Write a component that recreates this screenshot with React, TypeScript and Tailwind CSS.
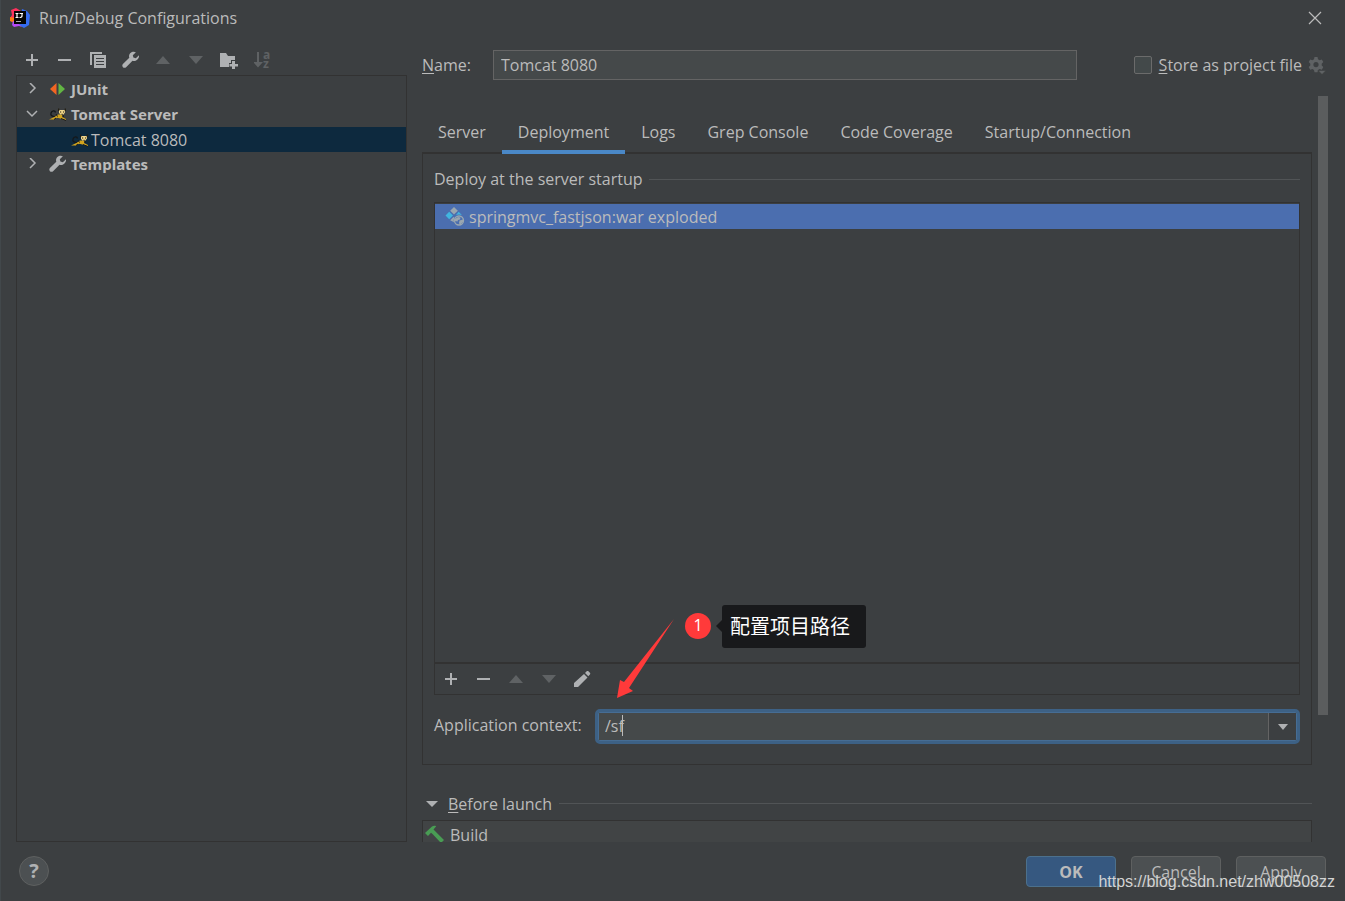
import { useState } from "react";
import type { ReactNode } from "react";

const PlusIcon = () => (
  <svg width="16" height="16" viewBox="0 0 16 16" fill="#afb1b3">
    <path d="M7 2h2v5h5v2H9v5H7V9H2V7h5z" />
  </svg>
);

const MinusIcon = () => (
  <svg width="16" height="16" viewBox="0 0 16 16" fill="#afb1b3">
    <path d="M1 7h13v2H1z" />
  </svg>
);

const UpIcon = () => (
  <svg width="16" height="16" viewBox="0 0 16 16" fill="#5f6264">
    <path d="M0 12l7-8 7 8z" />
  </svg>
);

const DownIcon = () => (
  <svg width="16" height="16" viewBox="0 0 16 16" fill="#5f6264">
    <path d="M0 4h14l-7 8z" />
  </svg>
);

const CopyIcon = () => (
  <svg width="18" height="18" viewBox="0 0 18 18" fill="#afb1b3">
    <path d="M1 1h12v2H3v11H1z" />
    <path fillRule="evenodd" d="M5 4h12v13H5zM7 7v1h8V7zM7 10v1h8v-1zM7 13v1h8v-1z" />
  </svg>
);

const WrenchIcon = () => (
  <svg width="18" height="18" viewBox="0 0 18 18" fill="#afb1b3">
    <path d="M17 4.200L13.800 7.200l-2.400-.6-.6-2.300L13.900 1.200C12 .3 9.900.6 8.400 2.100 7.100 3.400 6.700 5.200 7.300 6.800L.9 13.100c-.8.9-.8 2.200 0 3.100.9.800 2.300.8 3.200 0l6.400-6.400c1.600.5 3.400.2 4.700-1.100 1.300-1.200 2.100-2.900 1.800-4.500z" />
  </svg>
);

const FolderPlusIcon = () => (
  <svg width="20" height="18" viewBox="0 0 20 18" fill="#afb1b3">
    <path d="M0 2h6l2 3h7v4h-4v3H9v4H0z" />
    <path d="M12 10h3v3h3v2.500h-3v3h-3v-3H9.500V13H12z" />
  </svg>
);

const SortIcon = () => (
  <svg width="18" height="18" viewBox="0 0 18 18" fill="#5f6264">
    <path d="M3 1h2v10h4l-5 5.500L-1 11h4z" />
    <text x="9" y="8" fontSize="12" fontWeight="bold">a</text>
    <text x="9" y="17" fontSize="12" fontWeight="bold">z</text>
  </svg>
);

const PencilIcon = () => (
  <svg width="18" height="18" viewBox="0 0 18 18" fill="#afb1b3">
    <path d="M10 4l3.500 3.500L4 17H0v-4zM11 3l1.700-1.700c.5-.5 1.200-.5 1.700 0l1.500 1.500c.5.5.5 1.200 0 1.700L14.300 6.200z" />
  </svg>
);

const GearIcon = () => (
  <svg width="18" height="18" viewBox="0 0 18 18" fill="#5f6264">
    <path
      fillRule="evenodd"
      d="M6.500 0h3l.5 2.300 1.600.9 2.200-.7 1.500 2.600L13.700 6.700v1.900l1.600 1.500-1.500 2.600-2.200-.7-1.600.9-.5 2.300h-3L6 12.900 4.400 12l-2.200.7L.7 10.100l1.600-1.500V6.700L.7 5.100l1.500-2.600 2.200.7L6 2.300zM8 5a2.600 2.600 0 100 5.200A2.600 2.600 0 008 5z"
    />
    <path d="M10 13.500h8l-4 4z" stroke="#3c3f41" strokeWidth=".6" />
  </svg>
);

const JUnitIcon = () => (
  <svg width="18" height="16" viewBox="0 0 18 16">
    <path d="M7.500 2v12L1 8z" fill="#f26522" />
    <path d="M9.500 2v12L16 8z" fill="#62b543" />
  </svg>
);

const TomcatIcon = () => (
  <svg width="18" height="16" viewBox="0 0 18 16" className="shrink-0">
    <path d="M7 10.500C4 11 1 9.500 2 7s4-3 4.500-.5" fill="none" stroke="#15181a" strokeWidth="1.300" />
    <path d="M0 13.500L5.500 11 9 8.500h4.500L13 11l4 2v1.300l-5.500-1.800-3.500-.7-3 1.700H0z" fill="#d2a41d" />
    <path d="M7 8l1.500 2.500M5 13.500l2-1.500M12 12.500l5 2M14 9l.5 2" stroke="#191919" strokeWidth="1" />
    <path d="M10 4h6v2.500L14 9h-2l-2-2z" fill="#efd58a" />
    <path d="M9.700 2.500V5M16.300 2.500V5M11 6h1.200M14 6h1.200M12.500 8.300h1.200" stroke="#221d10" strokeWidth="1.200" />
  </svg>
);

const ArtifactIcon = () => (
  <svg width="20" height="20" viewBox="0 0 20 20">
    <path d="M9 0l3.800 3.800L9 7.500 5.200 3.800z" fill="#9aa7b0" />
    <path d="M4.200 4.700L8 8.500l-3.800 3.800L.5 8.500z" fill="#40b6e0" />
    <path d="M13.700 4.700L17 8.200c-2-.9-4.500-.8-6.300.2z" fill="#40b6e0" />
    <path d="M8.500 10l1 .6c-.8 1.500-.9 3-.5 4.600L5.200 13.200z" fill="#9aa7b0" />
    <circle cx="14" cy="13.500" r="4.500" fill="none" stroke="#9aa7b0" strokeWidth="1.300" />
    <path d="M10 12l3-2 2.500.5-.5 2-2 .5-.5 1.500L10 14zM14.500 13.500l3.500-1v2.500L15 18l-1-2z" fill="#9aa7b0" />
  </svg>
);

const HammerIcon = () => (
  <svg width="20" height="20" viewBox="0 0 20 20" fill="#499c54">
    <path d="M0 8l7-6.500c1.500-.9 3-.7 4.200-.3L8.500 4.500l2 2L19 15l-3 3-8.500-9-1.500-1.200L3 11z" />
  </svg>
);

const LogoIcon = () => (
  <svg width="20" height="20" viewBox="0 0 20 20">
    <path d="M1 2l5-2 5 3-5 9-6-2 2-3z" fill="#fe315d" />
    <path d="M0 9l5 1-1 5-4-2z" fill="#f97a12" />
    <path d="M12 1l5 2 3 4-1 10-5 3-5-3z" fill="#356cf0" />
    <path d="M3 13l4 1 5 5-3-1-5 1-2-2z" fill="#b74af7" />
    <path d="M4 3h12v13H4z" fill="#050505" />
    <path d="M5.500 5.500h3M7 5.500v4M5.500 9.500h3M9.500 5.500h3.500M12 5.500V8q0 1.500-2.500 1.500" fill="none" stroke="#fff" strokeWidth="1.200" />
    <path d="M6 13.500h5" stroke="#aaa" />
  </svg>
);

const Chevron = ({ open }: { open?: boolean }) => (
  <svg width="12" height="12" viewBox="0 0 12 12" fill="none" stroke="#afb1b3" strokeWidth="1.500">
    <path d={open ? "M1 3l5 5 5-5" : "M4 0l5 5-5 5"} />
  </svg>
);

const ToolButton = ({ label, disabled, children }: { label: string; disabled?: boolean; children: ReactNode }) => (
  <button type="button" aria-label={label} disabled={disabled} className="flex h-5 w-5 items-center justify-center">
    {children}
  </button>
);

const tabs = ["Server", "Deployment", "Logs", "Grep Console", "Code Coverage", "Startup/Connection"];

const TreeGroup = ({ open, icon, label }: { open?: boolean; icon: ReactNode; label: string }) => (
  <li className="flex h-[25px] items-center pb-px pl-[9px] font-['Noto_Sans',sans-serif] text-[15px] font-bold">
    <Chevron open={open} />
    <span className="ml-[11px] flex w-[22px] justify-center pr-1">{icon}</span>
    {label}
  </li>
);

const Sidebar = () => (
  <aside className="flex w-[391px] shrink-0 flex-col">
    <div className="flex h-[30px] items-center gap-[13px] pl-[6px]">
      <ToolButton label="Add"><PlusIcon /></ToolButton>
      <ToolButton label="Remove"><MinusIcon /></ToolButton>
      <ToolButton label="Copy"><CopyIcon /></ToolButton>
      <ToolButton label="Edit templates"><WrenchIcon /></ToolButton>
      <ToolButton label="Move up" disabled><UpIcon /></ToolButton>
      <ToolButton label="Move down" disabled><DownIcon /></ToolButton>
      <ToolButton label="New folder"><FolderPlusIcon /></ToolButton>
      <ToolButton label="Sort" disabled><SortIcon /></ToolButton>
    </div>
    <ul className="flex-1 border border-[#323232] pt-px">
      <TreeGroup icon={<JUnitIcon />} label="JUnit" />
      <TreeGroup open icon={<TomcatIcon />} label="Tomcat Server" />
      <li className="flex h-[25px] items-center gap-[2px] bg-[#0d293e] pl-[54px]">
        <TomcatIcon />
        Tomcat 8080
      </li>
      <TreeGroup icon={<WrenchIcon />} label="Templates" />
    </ul>
  </aside>
);

const Annotation = () => (
  <div className="pointer-events-none absolute -bottom-[18px] left-[182px] flex items-start">
    <svg width="58" height="94" viewBox="0 0 58 94" className="mt-[13px]">
      <path d="M57 1L12 70l4 3L0 80l3-18 4 2z" fill="#ff3a3a" />
    </svg>
    <span className="ml-[10px] mt-2 flex h-[26px] w-[26px] items-center justify-center rounded-full bg-[#ff3a3a] pb-[2px] text-white">
      1
    </span>
    <svg width="6" height="12" viewBox="0 0 6 12" className="ml-[5px] mt-[15px]">
      <path d="M6 0v12L0 6z" fill="#18191b" />
    </svg>
    <span className="flex h-[43px] items-center rounded-[3px] bg-[#18191b] pl-2 pr-4 pt-px text-[20px] text-white">
      配置项目路径
    </span>
  </div>
);

const Deployment = () => {
  const [context, setContext] = useState("/sf");

  return (
    <section className="flex flex-1 flex-col border border-t-2 border-[#323232] px-[11px] pb-5">
      <div className="flex h-12 items-center gap-[6px] pt-[2px]">
        <h2>Deploy at the server startup</h2>
        <div className="h-px flex-1 bg-[#515456]" />
      </div>
      <div className="relative flex flex-1 flex-col border border-[#323232]">
        <ul className="flex-1 pt-px">
          <li className="flex h-[25px] items-center gap-1 bg-[#4b6eaf] pl-[10px]">
            <ArtifactIcon />
            springmvc_fastjson:war exploded
          </li>
        </ul>
        <div className="flex h-8 items-center gap-[13px] border-t-2 border-[#323232] pl-[6px]">
          <ToolButton label="Add artifact"><PlusIcon /></ToolButton>
          <ToolButton label="Remove artifact"><MinusIcon /></ToolButton>
          <ToolButton label="Move artifact up" disabled><UpIcon /></ToolButton>
          <ToolButton label="Move artifact down" disabled><DownIcon /></ToolButton>
          <ToolButton label="Edit artifact"><PencilIcon /></ToolButton>
        </div>
        <Annotation />
      </div>
      <div className="mt-[14px] flex items-center">
        <label htmlFor="context" className="w-[161px] pb-[3px]">Application context:</label>
        <div className="flex h-[35px] flex-1 overflow-hidden rounded-[5px] border-[3px] border-[#3d6185] bg-[#45494a]">
          <div className="relative flex flex-1 border border-[#466d94]">
            <input
              id="context"
              value={context}
              onChange={(e) => setContext(e.target.value)}
              className="w-full bg-transparent pb-[2px] pl-[6px] outline-none"
            />
            <span className="absolute left-[23px] top-[2px] h-[21px] w-px bg-[#bbbbbb]" />
            <button type="button" aria-label="Show contexts" className="flex w-7 shrink-0 items-center justify-center border-l border-[#646464] bg-[#3c3f41]">
              <svg width="12" height="8" viewBox="0 0 12 8" fill="#afb1b3"><path d="M1 1h10L6 7z" /></svg>
            </button>
          </div>
        </div>
      </div>
    </section>
  );
};

const Editor = () => {
  const [tab, setTab] = useState("Deployment");
  const [name, setName] = useState("Tomcat 8080");

  return (
    <div className="flex min-w-0 flex-1 flex-col">
      <div className="flex h-[51px] items-start pt-[5px]">
        <label htmlFor="name" className="flex h-[30px] w-[71px] items-center pb-px">
          <span><span className="underline underline-offset-2">N</span>ame:</span>
        </label>
        <input
          id="name"
          value={name}
          onChange={(e) => setName(e.target.value)}
          className="h-[30px] flex-1 border border-[#646464] bg-[#45494a] px-[7px] pb-px outline-none"
        />
        <label className="ml-[57px] flex h-[30px] items-center gap-[7px]">
          <input type="checkbox" className="h-[18px] w-[18px] appearance-none rounded-[2px] border border-[#6b6b6b] bg-[#43494a]" />
          <span><span className="underline underline-offset-2">S</span>tore as project file</span>
        </label>
        <button type="button" aria-label="Storage options" disabled className="ml-[6px] mr-[2px] flex h-[30px] items-center pt-[2px]">
          <GearIcon />
        </button>
      </div>
      <div className="flex flex-1 gap-[6px]">
        <div className="flex min-w-0 flex-1 flex-col">
          <nav role="tablist" className="z-10 -mb-[2px] flex pt-[15px]">
            {tabs.map((t) => (
              <button
                key={t}
                type="button"
                role="tab"
                aria-selected={t === tab}
                onClick={() => setTab(t)}
                className={
                  t === tab
                    ? "h-[43px] border-b-4 border-[#4a88c7] px-4 pt-[2px]"
                    : "h-[43px] border-b-4 border-transparent px-4 pt-[2px]"
                }
              >
                {t}
              </button>
            ))}
          </nav>
          <Deployment />
          <div className="mt-[22px] flex h-[33px] items-center">
            <button type="button" className="flex items-center gap-[10px] pl-1">
              <svg width="12" height="8" viewBox="0 0 12 8" fill="#afb1b3"><path d="M0 1h12L6 7z" /></svg>
              <span><span className="underline underline-offset-2">B</span>efore launch</span>
            </button>
            <div className="ml-[7px] h-px flex-1 bg-[#515456]" />
          </div>
          <div className="flex h-[22px] items-start gap-[5px] overflow-hidden border border-b-0 border-[#323232] bg-[#414445] pl-[2px] pt-1">
            <HammerIcon />
            <span>Build</span>
          </div>
        </div>
        <div className="w-[10px]">
          <div className="h-[83%] bg-[#5b5d5e]" />
        </div>
      </div>
    </div>
  );
};

export default function App() {
  return (
    <div className="relative flex min-h-screen flex-col border-l border-[#42484b] bg-[#3c3f41] font-['Open_Sans','Noto_Sans_CJK_SC',sans-serif] text-[16px] leading-5 text-[#bbbbbb]">
      <header className="flex h-[45px] items-start justify-between pl-[9px] pr-[23px] pt-2">
        <div className="flex items-center gap-[9px]">
          <LogoIcon />
          <h1>Run/Debug Configurations</h1>
        </div>
        <button type="button" aria-label="Close" className="mt-[3px]">
          <svg width="14" height="14" viewBox="0 0 14 14" stroke="#bbbbbb" strokeWidth="1.200">
            <path d="M1 1l12 12M13 1L1 13" />
          </svg>
        </button>
      </header>
      <main className="flex flex-1 gap-[15px] pl-[15px] pr-[17px]">
        <Sidebar />
        <Editor />
      </main>
      <footer className="flex h-[59px] items-start gap-[15px] pl-[18px] pr-[19px] pt-[14px]">
        <button type="button" aria-label="Help" className="mr-auto flex h-[30px] w-[30px] items-center justify-center rounded-full border border-[#5e6060] bg-[#4c5052] text-[20px] font-bold text-[#afb1b3]">
          ?
        </button>
        <button type="button" className="h-[31px] w-[90px] rounded-[4px] border border-[#4c708c] bg-[#365880] font-bold">OK</button>
        <button type="button" className="h-[31px] w-[90px] rounded-[4px] border border-[#5e6060] bg-[#4c5052]">Cancel</button>
        <button type="button" className="h-[31px] w-[90px] rounded-[4px] border border-[#5e6060] bg-[#4c5052]">Apply</button>
      </footer>
      <p className="pointer-events-none absolute bottom-[9px] right-[10px] font-['Liberation_Sans',sans-serif] text-[16px] text-[#d2d3d3]">
        https://blog.csdn.net/zhw00508zz
      </p>
    </div>
  );
}
